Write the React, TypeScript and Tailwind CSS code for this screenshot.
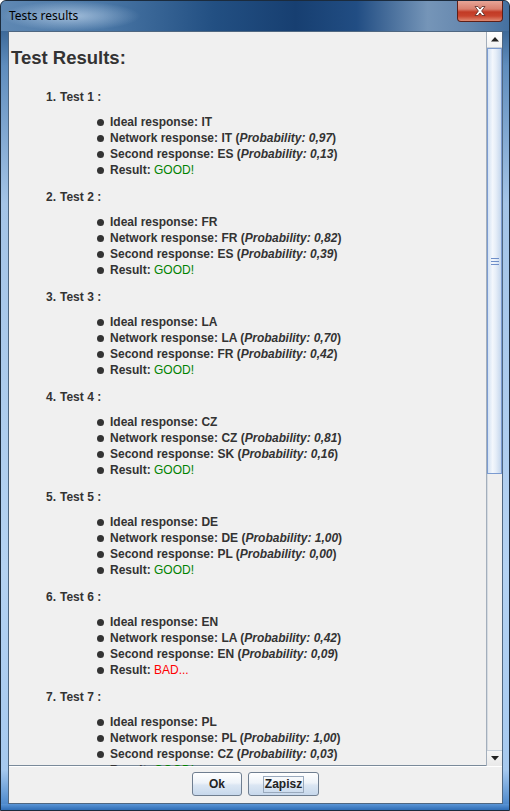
import React from 'react';

type TestRow = {
  ideal: string;
  net: string;
  netP: string;
  second: string;
  secondP: string;
  good: boolean;
};

const tests: TestRow[] = [
  { ideal: 'IT', net: 'IT', netP: '0,97', second: 'ES', secondP: '0,13', good: true },
  { ideal: 'FR', net: 'FR', netP: '0,82', second: 'ES', secondP: '0,39', good: true },
  { ideal: 'LA', net: 'LA', netP: '0,70', second: 'FR', secondP: '0,42', good: true },
  { ideal: 'CZ', net: 'CZ', netP: '0,81', second: 'SK', secondP: '0,16', good: true },
  { ideal: 'DE', net: 'DE', netP: '1,00', second: 'PL', secondP: '0,00', good: true },
  { ideal: 'EN', net: 'LA', netP: '0,42', second: 'EN', secondP: '0,09', good: false },
  { ideal: 'PL', net: 'PL', netP: '1,00', second: 'CZ', secondP: '0,03', good: true },
];

const Bullet = ({ children }: { children: React.ReactNode }) => (
  <div className="flex items-center h-[16px] pl-[88px]">
    <span className="w-[7px] h-[7px] rounded-full bg-[#333333] shrink-0" />
    <span className="ml-[6px] whitespace-nowrap">{children}</span>
  </div>
);

const Arrow = ({ down }: { down?: boolean }) => (
  <svg width="8" height="5" viewBox="0 0 8 5">
    {down ? <polygon points="0,0 8,0 4,4.5" fill="#222" /> : <polygon points="0,4.5 8,4.5 4,0" fill="#222" />}
  </svg>
);

export default function App() {
  return (
    <div
      className="relative w-[510px] h-[811px] overflow-hidden rounded-t-[6px] border border-[#1b2b3d] bg-[linear-gradient(to_bottom,#1f4a79_0%,#5f8dbd_8%,#a4c4e7_25%,#b4d2f2_70%,#a6c9ef_95%,#3f7fc6_100%)]"
      style={{ fontFamily: '"Liberation Sans", Arial, sans-serif' }}
    >
      {/* title bar */}
      <div className="relative h-[30px] flex items-center pl-[8px] bg-[linear-gradient(to_right,#5f88b3_0%,#4a77a6_20%,#224f82_42%,#173f71_58%,#214d83_70%,#7595b8_84%,#6587ae_92%,#4470a0_100%)]">
        <div className="absolute left-[0px] top-[0px] w-[140px] h-[30px] bg-[radial-gradient(ellipse_at_center,rgba(215,232,250,0.6),rgba(215,232,250,0)_70%)]" />
        <span
          className="relative text-[12px] text-black"
          style={{ fontFamily: '"Noto Sans", "Open Sans", sans-serif' }}
        >
          Tests results
        </span>
        <div className="absolute right-[6px] top-[0px] w-[46px] h-[21px] rounded-b-[4px] border border-t-0 border-[#5d1f18] bg-[linear-gradient(to_bottom,#e7a597_0%,#d9806f_40%,#c23a25_55%,#c8442e_75%,#df8a72_100%)] flex items-center justify-center">
          <svg width="14" height="12" viewBox="0 0 14 12">
            <path
              d="M2 1.5 L5 1.5 L7 4 L9 1.5 L12 1.5 L8.6 6 L12 10.5 L9 10.5 L7 8 L5 10.5 L2 10.5 L5.4 6 Z"
              fill="#ffffff"
              stroke="#5a2a22"
              strokeWidth="0.8"
            />
          </svg>
        </div>
      </div>

      <div className="flex h-[773px]">
        <div className="w-[7px] shrink-0" />
        {/* dialog panel */}
        <div className="w-[495px] shrink-0 flex flex-col bg-[#f0f0f0] border border-[#4f6781]">
          {/* scroll pane */}
          <div className="flex h-[734px] border-b border-[#7a8a9a]">
            <div className="w-[477px] h-[734px] overflow-hidden text-[12px] font-bold text-[#333333] leading-[16px]">
              <div className="pt-[15px] pl-[2px] text-[18.5px] leading-[22px]">Test Results:</div>
              <div className="pt-[20px]">
                {tests.map((t, i) => (
                  <div key={i} className="h-[100px]">
                    <div className="flex h-[16px] pl-[37px] whitespace-nowrap">
                      <span className="w-[10px]">{i + 1}.</span>
                      <span className="ml-[4px]">Test {i + 1} :</span>
                    </div>
                    <div className="pt-[9px]">
                      <Bullet>Ideal response: {t.ideal}</Bullet>
                      <Bullet>
                        Network response: {t.net} (<i>Probability: {t.netP}</i>)
                      </Bullet>
                      <Bullet>
                        Second response: {t.second} (<i>Probability: {t.secondP}</i>)
                      </Bullet>
                      <Bullet>
                        Result:{' '}
                        {t.good ? (
                          <span className="font-normal text-[#008200]">GOOD!</span>
                        ) : (
                          <span className="font-normal text-[#ff0000]">BAD...</span>
                        )}
                      </Bullet>
                    </div>
                  </div>
                ))}
              </div>
            </div>

            {/* scrollbar */}
            <div className="w-[16px] h-[734px] flex flex-col border-l border-[#a3aebb] bg-[#efefef]">
              <div className="h-[16px] flex items-center justify-center bg-[linear-gradient(to_bottom,#ffffff,#f2f2f2)] border-b border-[#c9d1da]">
                <Arrow />
              </div>
              <div className="h-[426px] flex items-center justify-center border border-[#7b9bd0] bg-[linear-gradient(to_right,#d3e2f4_0%,#f3f7fc_35%,#e6eef8_60%,#c5d7ed_100%)]">
                <div className="flex flex-col gap-[2px]">
                  <span className="block w-[8px] h-[1px] bg-[#6f8fc9]" />
                  <span className="block w-[8px] h-[1px] bg-[#6f8fc9]" />
                  <span className="block w-[8px] h-[1px] bg-[#6f8fc9]" />
                </div>
              </div>
              <div className="flex-1 border-l border-[#d5dbe2]" />
              <div className="h-[16px] flex items-center justify-center bg-[linear-gradient(to_bottom,#f6f6f6,#e9e9e9)] border-t border-[#c9d1da]">
                <Arrow down />
              </div>
            </div>
          </div>

          {/* buttons */}
          <div className="flex-1 border-t border-white flex justify-center gap-[6px] pt-[5px]">
            <button className="w-[50px] h-[24px] rounded-[3px] border border-[#6f7e90] bg-[linear-gradient(to_bottom,#ffffff_0%,#eef3f9_45%,#dbe6f3_55%,#c7d8ec_100%)] text-[12px] font-bold text-[#222222]">
              Ok
            </button>
            <button className="w-[71px] h-[24px] rounded-[3px] border border-[#6f7e90] bg-[linear-gradient(to_bottom,#ffffff_0%,#eef3f9_45%,#dbe6f3_55%,#c7d8ec_100%)] text-[12px] font-bold text-[#222222] flex items-center justify-center">
              <span className="border border-[#99a9bd] px-[1px] leading-[15px]">Zapisz</span>
            </button>
          </div>
        </div>
        <div className="flex-1" />
      </div>
      <div className="h-[6px] bg-[linear-gradient(to_bottom,#5a95d6,#2f6db5)]" />
    </div>
  );
}
